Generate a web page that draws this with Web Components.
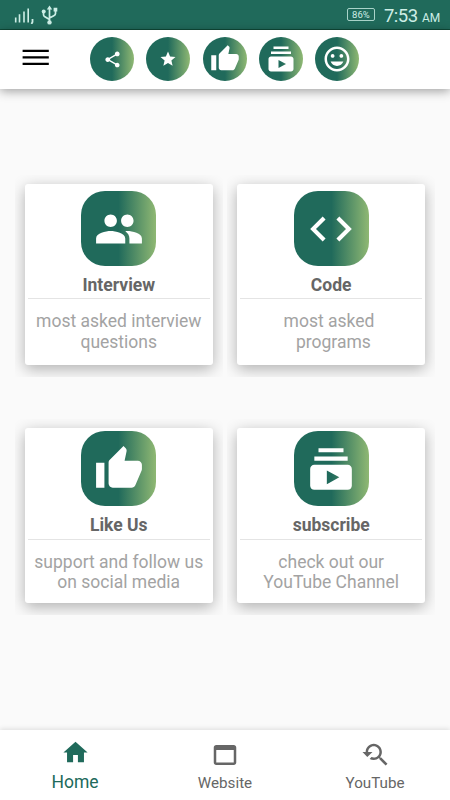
<!DOCTYPE html>
<html lang="en">
<head>
<meta charset="utf-8">
<meta name="viewport" content="width=device-width, initial-scale=1">
<title>Interview Code</title>
<style>
  html, body {
    height: 100%;
    margin: 0;
  }
  body {
    background: #fafafa;
    font-family: Roboto, "Liberation Sans", sans-serif;
    --green: #206a5b;
    --fade: linear-gradient(90deg, #206a5b 0%, #206a5b 50%, #8fb873 100%);
  }
</style>
</head>
<body>
<app-screen>
  <status-bar slot="top" battery="86%" time="7:53" period="AM"></status-bar>
  <app-toolbar slot="top">
    <round-button icon="share" size="19"></round-button>
    <round-button icon="star" size="18"></round-button>
    <round-button icon="thumb" size="30"></round-button>
    <round-button icon="subscriptions" size="30"></round-button>
    <round-button icon="smile" size="30"></round-button>
  </app-toolbar>

  <menu-card icon="people">
    <span slot="title">Interview</span>
    most asked interview<br>questions
  </menu-card>
  <menu-card icon="code">
    <span slot="title">Code</span>
    most asked&nbsp;<br>&nbsp;programs
  </menu-card>
  <menu-card icon="thumb" compact>
    <span slot="title">Like Us</span>
    support and follow us<br>on social media
  </menu-card>
  <menu-card icon="subscriptions" compact>
    <span slot="title">subscribe</span>
    check out our<br>YouTube Channel
  </menu-card>

  <nav-bar slot="bottom">
    <nav-item icon="home" active>Home</nav-item>
    <nav-item icon="web">Website</nav-item>
    <nav-item icon="searched">YouTube</nav-item>
  </nav-bar>
</app-screen>

<script>
const ICONS = {
  share: 'M18 16.08c-.76 0-1.44.3-1.96.77L8.91 12.7c.05-.23.09-.46.09-.7s-.04-.47-.09-.7l7.05-4.11c.54.5 1.25.81 2.04.81 1.66 0 3-1.34 3-3s-1.34-3-3-3-3 1.34-3 3c0 .24.04.47.09.7L8.04 9.81C7.5 9.31 6.79 9 6 9c-1.66 0-3 1.34-3 3s1.34 3 3 3c.79 0 1.5-.31 2.04-.81l7.12 4.16c-.05.21-.08.43-.08.65 0 1.61 1.31 2.92 2.92 2.92s2.92-1.31 2.92-2.92-1.31-2.92-2.92-2.92z',
  star: 'M12 17.27L18.18 21l-1.64-7.03L22 9.24l-7.19-.61L12 2 9.19 8.63 2 9.24l5.46 4.73L5.82 21z',
  thumb: 'M1 21h4V9H1v12zm22-11c0-1.1-.9-2-2-2h-6.31l.95-4.57.03-.32c0-.41-.17-.79-.44-1.06L14.17 1 7.59 7.59C7.22 7.95 7 8.45 7 9v10c0 1.1.9 2 2 2h9c.83 0 1.54-.5 1.84-1.22l3.02-7.05c.09-.23.14-.47.14-.73v-2z',
  subscriptions: 'M20 8H4V6h16v2zm-2-6H6v2h12V2zm4 10v8c0 1.1-.9 2-2 2H4c-1.1 0-2-.9-2-2v-8c0-1.1.9-2 2-2h16c1.1 0 2 .9 2 2zm-6 4l-6-3.27v6.53L16 16z',
  smile: 'M11.99 2C6.47 2 2 6.48 2 12s4.47 10 9.99 10C17.52 22 22 17.52 22 12S17.52 2 11.99 2zM12 20c-4.42 0-8-3.58-8-8s3.58-8 8-8 8 3.58 8 8-3.58 8-8 8zm3.5-9c.83 0 1.5-.67 1.5-1.5S16.33 8 15.5 8 14 8.67 14 9.5s.67 1.5 1.5 1.5zm-7 0c.83 0 1.5-.67 1.5-1.5S9.33 8 8.5 8 7 8.67 7 9.5 7.67 11 8.5 11zm6.61 3H6.89c.8 2.04 2.78 3.5 5.11 3.5s4.31-1.46 5.11-3.5h-2z',
  people: 'M16 11c1.66 0 2.99-1.34 2.99-3S17.66 5 16 5s-3 1.34-3 3 1.34 3 3 3zm-8 0c1.66 0 2.99-1.34 2.99-3S9.66 5 8 5 5 6.34 5 8s1.34 3 3 3zm0 2c-2.33 0-7 1.17-7 3.5V19h14v-2.5c0-2.33-4.67-3.5-7-3.5zm8 0c-.29 0-.62.02-.97.05 1.16.84 1.97 1.97 1.97 3.45V19h6v-2.5c0-2.33-4.67-3.5-7-3.5z',
  code: 'M9.4 16.6L4.8 12l4.6-4.6L8 6l-6 6 6 6 1.4-1.4zm5.2 0l4.6-4.6-4.6-4.6L16 6l6 6-6 6-1.4-1.4z',
  home: 'M10 20v-6h4v6h5v-8h3L12 3 2 12h3v8z',
  web: 'M19 4H5c-1.11 0-2 .9-2 2v12c0 1.1.89 2 2 2h14c1.1 0 2-.9 2-2V6c0-1.1-.89-2-2-2zm0 14H5V8h14v10z',
  searched: 'M17.01 14h-.8l-.27-.27c.98-1.14 1.57-2.61 1.57-4.23 0-3.59-2.91-6.5-6.5-6.5s-6.5 3-6.5 6.5H2l3.84 4 4.16-4H6.51C6.51 7 8.53 5 11.01 5s4.5 2.01 4.5 4.5c0 2.48-2.02 4.5-4.5 4.5-.65 0-1.26-.14-1.82-.38L7.71 15.1c.97.57 2.09.9 3.3.9 1.61 0 3.08-.59 4.22-1.57l.27.27v.79l5.01 4.99L22 19l-4.99-5z'
};

function icon(name, size) {
  return `<svg width="${size}" height="${size}" viewBox="0 0 24 24" fill="currentColor"><path d="${ICONS[name]}"/></svg>`;
}

class AppScreen extends HTMLElement {
  connectedCallback() {
    this.attachShadow({ mode: 'open' }).innerHTML = `
      <style>
        :host {
          display: flex;
          flex-direction: column;
          height: 100vh;
          overflow: hidden;
        }
        main {
          flex: 1;
          display: grid;
          grid-template-columns: 207.5px 208px;
          grid-template-rows: 202px 196px;
          column-gap: 4.7px;
          row-gap: 42px;
          align-content: start;
          padding: 86px 0 0 15px;
        }
      </style>
      <slot name="top"></slot>
      <main><slot></slot></main>
      <slot name="bottom"></slot>
    `;
  }
}
customElements.define('app-screen', AppScreen);

class StatusBar extends HTMLElement {
  connectedCallback() {
    this.attachShadow({ mode: 'open' }).innerHTML = `
      <style>
        :host {
          display: flex;
          align-items: center;
          box-sizing: border-box;
          height: 30px;
          padding: 0 10px 0 14px;
          background: var(--green);
          border-bottom: 1px solid #0f4a38;
          color: #cdeee6;
        }
        svg { display: block; }
        .usb { margin-left: 6px; }
        .battery {
          box-sizing: border-box;
          width: 28px;
          height: 13px;
          margin-left: auto;
          border: 1px solid #a9d3c9;
          border-radius: 2px;
          font-size: 9.5px;
          line-height: 12px;
          text-align: center;
        }
        .time {
          margin-left: 9px;
          font-size: 18.5px;
          line-height: 26px;
          padding-top: 4px;
          letter-spacing: -0.5px;
          white-space: nowrap;
        }
        small { font-size: 12px; margin-left: 4.5px; letter-spacing: -0.2px; }
      </style>
      <svg width="21" height="18" viewBox="0 0 21 18" fill="none" stroke="currentColor" stroke-width="1.6">
        <path d="M1.7 16.5v-5M5.5 16.5V8.3M10 16.5v-11M14.2 16.5v-14"/>
        <path d="M18.5 13v3l-1 2" stroke-width="1.8"/>
      </svg>
      <svg class="usb" width="17" height="20" viewBox="0 0 17 20" fill="none" stroke="currentColor" stroke-width="1.7">
        <path d="M8.5 3v14M8.5 14.5l-5-3q-1-.7-1-2V7M8.5 13l4.3-2.2q1.7-.8 1.7-2.3V6"/>
        <path d="M8.5.5L5.8 4.5h5.4zM12.6 2.8h3.7v3.7h-3.7z" fill="currentColor" stroke="none"/>
        <circle cx="2.7" cy="6.5" r="2" fill="currentColor" stroke="none"/>
        <circle cx="8.5" cy="17.4" r="2.2" fill="currentColor" stroke="none"/>
      </svg>
      <div class="battery">${this.getAttribute('battery')}</div>
      <div class="time">${this.getAttribute('time')}<small>${this.getAttribute('period')}</small></div>
    `;
  }
}
customElements.define('status-bar', StatusBar);

class AppToolbar extends HTMLElement {
  connectedCallback() {
    this.attachShadow({ mode: 'open' }).innerHTML = `
      <style>
        :host {
          display: flex;
          align-items: flex-start;
          box-sizing: border-box;
          height: 59px;
          padding: 7px 0 0 22px;
          background: #fff;
          box-shadow: 0 2px 10px rgba(0, 0, 0, 0.38);
        }
        .menu { display: block; margin-top: 12px; }
        .actions {
          display: flex;
          gap: 12.2px;
          margin-left: 41.3px;
        }
      </style>
      <svg class="menu" width="27" height="17" viewBox="0 0 27 17">
        <path d="M.6.7h26.2v2.4H.6zM.6 7.2h26.2v2.4H.6zM.6 13.7h26.2v2.4H.6z"/>
      </svg>
      <div class="actions"><slot></slot></div>
    `;
  }
}
customElements.define('app-toolbar', AppToolbar);

class RoundButton extends HTMLElement {
  connectedCallback() {
    this.attachShadow({ mode: 'open' }).innerHTML = `
      <style>
        :host {
          display: grid;
          place-items: center;
          width: 44px;
          height: 44px;
          border-radius: 50%;
          background: var(--fade);
          color: #fff;
        }
        svg { display: block; }
      </style>
      ${icon(this.getAttribute('icon'), this.getAttribute('size'))}
    `;
  }
}
customElements.define('round-button', RoundButton);

class MenuCard extends HTMLElement {
  connectedCallback() {
    this.attachShadow({ mode: 'open' }).innerHTML = `
      <style>
        /* the host clips the shadow of the card */
        :host {
          display: block;
          box-sizing: border-box;
          overflow: hidden;
          padding: 9px 10px 12px;
        }
        .card {
          box-sizing: border-box;
          height: 100%;
          padding-top: 7px;
          background: #fff;
          border-radius: 3px;
          box-shadow: 0 4px 15px rgba(0, 0, 0, 0.3);
          text-align: center;
        }
        :host([compact]) .card { padding-top: 3px; }
        .tile {
          display: grid;
          place-items: center;
          width: 75px;
          height: 75px;
          margin: 0 auto;
          border-radius: 24px;
          background: var(--fade);
          color: #fff;
        }
        svg { display: block; }
        h2 {
          margin: 8px 3px 0;
          height: 24px;
          border-bottom: 1px solid #e4e4e4;
          color: #666;
          font-size: 17.5px;
          font-weight: 700;
          line-height: 23px;
        }
        :host([compact]) h2 { height: 25px; }
        p {
          margin: 12px 0 0;
          color: #a3a3a3;
          font-size: 17.5px;
          line-height: 20.5px;
          white-space: nowrap;
        }
        :host([compact]) p { margin-top: 11.5px; }
      </style>
      <div class="card">
        <div class="tile">${icon(this.getAttribute('icon'), 50)}</div>
        <h2><slot name="title"></slot></h2>
        <p><slot></slot></p>
      </div>
    `;
  }
}
customElements.define('menu-card', MenuCard);

class NavBar extends HTMLElement {
  connectedCallback() {
    this.attachShadow({ mode: 'open' }).innerHTML = `
      <style>
        :host {
          display: grid;
          grid-template-columns: repeat(3, 1fr);
          height: 70px;
          background: #fff;
          box-shadow: 0 -1px 5px rgba(0, 0, 0, 0.12);
        }
      </style>
      <slot></slot>
    `;
  }
}
customElements.define('nav-bar', NavBar);

class NavItem extends HTMLElement {
  connectedCallback() {
    const active = this.hasAttribute('active');
    this.attachShadow({ mode: 'open' }).innerHTML = `
      <style>
        :host {
          display: flex;
          flex-direction: column;
          align-items: center;
          padding-top: 10px;
          color: #666;
          font-size: 15.2px;
          line-height: 20px;
        }
        :host([active]) {
          padding-top: 8px;
          color: var(--green);
          font-size: 17.5px;
        }
        svg { display: block; }
        span { margin-top: 2.5px; }
        :host([active]) span { margin-top: 5px; }
      </style>
      ${icon(this.getAttribute('icon'), active ? 29 : 30)}
      <span><slot></slot></span>
    `;
  }
}
customElements.define('nav-item', NavItem);
</script>
</body>
</html>
